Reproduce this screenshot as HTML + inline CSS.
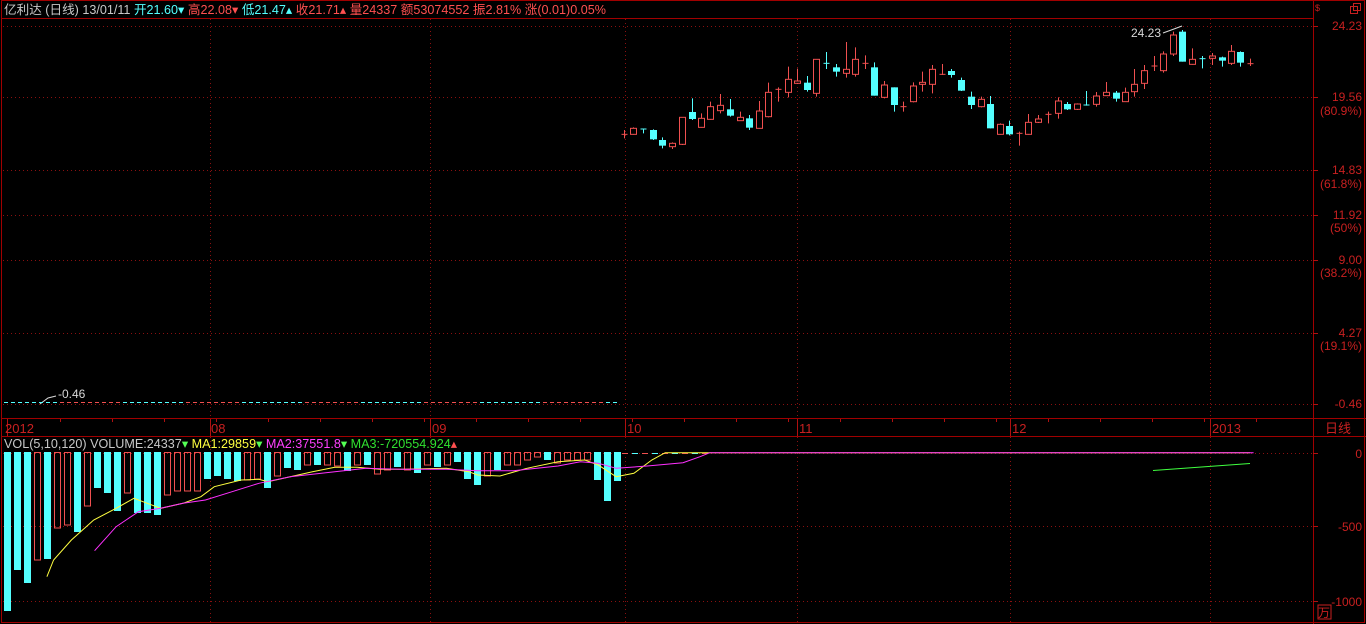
<!DOCTYPE html>
<html><head><meta charset="utf-8">
<style>
html,body{margin:0;padding:0;background:#000;width:1366px;height:624px;overflow:hidden;}
svg{display:block;font-family:"Liberation Sans","Noto Sans CJK SC",sans-serif;}
</style></head>
<body>
<svg id="s" width="1366" height="624" xmlns="http://www.w3.org/2000/svg">
<rect x="0" y="0" width="1366" height="624" fill="#000"/>
<g stroke="#a00000" fill="none" stroke-width="1">
<rect x="1.5" y="0.5" width="1363" height="622"/>
<line x1="1313.5" y1="0" x2="1313.5" y2="624"/>
<line x1="2" y1="18.5" x2="1313" y2="18.5"/>
<line x1="2" y1="418.5" x2="1366" y2="418.5"/>
<line x1="2" y1="436.5" x2="1366" y2="436.5"/>
</g>
<g stroke="#8a1010" stroke-dasharray="1,3" stroke-width="1">
<line x1="3" y1="26.5" x2="1313" y2="26.5"/>
<line x1="3" y1="97.5" x2="1313" y2="97.5"/>
<line x1="3" y1="170.5" x2="1313" y2="170.5"/>
<line x1="3" y1="215.5" x2="1313" y2="215.5"/>
<line x1="3" y1="260.5" x2="1313" y2="260.5"/>
<line x1="3" y1="333.5" x2="1313" y2="333.5"/>
<line x1="3" y1="404.5" x2="1313" y2="404.5"/>
<line x1="3" y1="453.5" x2="1313" y2="453.5"/>
<line x1="3" y1="526.5" x2="1313" y2="526.5"/>
<line x1="3" y1="601.5" x2="1313" y2="601.5"/>
<line x1="210.5" y1="19" x2="210.5" y2="418"/><line x1="210.5" y1="437" x2="210.5" y2="622"/>
<line x1="430.5" y1="19" x2="430.5" y2="418"/><line x1="430.5" y1="437" x2="430.5" y2="622"/>
<line x1="625.5" y1="19" x2="625.5" y2="418"/><line x1="625.5" y1="437" x2="625.5" y2="622"/>
<line x1="797.5" y1="19" x2="797.5" y2="418"/><line x1="797.5" y1="437" x2="797.5" y2="622"/>
<line x1="1010.5" y1="19" x2="1010.5" y2="418"/><line x1="1010.5" y1="437" x2="1010.5" y2="622"/>
<line x1="1210.5" y1="19" x2="1210.5" y2="418"/><line x1="1210.5" y1="437" x2="1210.5" y2="622"/>
</g>
<g stroke="#b01010" stroke-width="1">
<line x1="7.5" y1="419" x2="7.5" y2="436"/><line x1="210.5" y1="419" x2="210.5" y2="436"/>
<line x1="430.5" y1="419" x2="430.5" y2="436"/><line x1="625.5" y1="419" x2="625.5" y2="436"/>
<line x1="797.5" y1="419" x2="797.5" y2="436"/><line x1="1010.5" y1="419" x2="1010.5" y2="436"/>
<line x1="1210.5" y1="419" x2="1210.5" y2="436"/>
<line x1="1313" y1="26.5" x2="1318" y2="26.5"/><line x1="1313" y1="97.5" x2="1318" y2="97.5"/>
<line x1="1313" y1="170.5" x2="1318" y2="170.5"/><line x1="1313" y1="215.5" x2="1318" y2="215.5"/>
<line x1="1313" y1="260.5" x2="1318" y2="260.5"/><line x1="1313" y1="333.5" x2="1318" y2="333.5"/>
<line x1="1313" y1="404.5" x2="1318" y2="404.5"/><line x1="1313" y1="453.5" x2="1318" y2="453.5"/>
<line x1="1313" y1="526.5" x2="1318" y2="526.5"/><line x1="1313" y1="601.5" x2="1318" y2="601.5"/>
</g>
<g font-size="12.6">
<text x="4" y="14"><tspan fill="#c8c8c8">亿利达 (日线) 13/01/11 </tspan><tspan fill="#54ffff">开21.60▾ </tspan><tspan fill="#ff5050">高22.08▾ </tspan><tspan fill="#54ffff">低21.47▴ </tspan><tspan fill="#ff5050">收21.71▴ 量24337 额53074552 振2.81% 涨(0.01)0.05%</tspan></text>
<text x="4" y="448"><tspan fill="#c8c8c8">VOL(5,10,120) VOLUME:24337</tspan><tspan fill="#54ff54">▾ </tspan><tspan fill="#ffff40">MA1:29859</tspan><tspan fill="#54ff54">▾ </tspan><tspan fill="#ff40ff">MA2:37551.8</tspan><tspan fill="#54ff54">▾ </tspan><tspan fill="#30e030">MA3:-720554.924</tspan><tspan fill="#ff5050">▴</tspan></text>
</g>
<g font-size="13" fill="#c82020">
<text x="5" y="433">2012</text><text x="211" y="433">08</text><text x="432" y="433">09</text>
<text x="627" y="433">10</text><text x="799" y="433">11</text><text x="1012" y="433">12</text>
<text x="1212" y="433">2013</text><text x="1325" y="433">日线</text>
</g>
<g font-size="12" fill="#c82020" text-anchor="end">
<text x="1362" y="30">24.23</text>
<text x="1362" y="101">19.56</text><text x="1362" y="115">(80.9%)</text>
<text x="1362" y="174">14.83</text><text x="1362" y="188">(61.8%)</text>
<text x="1362" y="219">11.92</text><text x="1362" y="232">(50%)</text>
<text x="1362" y="264">9.00</text><text x="1362" y="277">(38.2%)</text>
<text x="1362" y="337">4.27</text><text x="1362" y="350">(19.1%)</text>
<text x="1362" y="408">-0.46</text>
<text x="1362" y="458">0</text><text x="1362" y="531">-500</text><text x="1362" y="606">-1000</text>
</g>
<rect x="1318" y="605" width="13" height="14" fill="none" stroke="#c82020"/>
<text x="1318" y="617" font-size="12" fill="#c82020">万</text>
<text x="1315" y="11" font-size="9" fill="#c82020">$</text>
<rect x="1350.5" y="6.5" width="7" height="7" fill="none" stroke="#c82020"/>
<rect x="1353.5" y="3.5" width="7" height="7" fill="none" stroke="#c82020"/>
<text x="58" y="398" font-size="12" fill="#d8d8d8">-0.46</text>
<polyline points="40,404 48,398 56,396" fill="none" stroke="#d8d8d8"/>
<text x="1131" y="37" font-size="12" fill="#d8d8d8">24.23</text>
<polyline points="1163,33 1174,29 1182,26" fill="none" stroke="#d8d8d8"/>
<g id="c"></g>
</svg>
<script>
var R="#f05050",C="#54ffff";
var out="";
function ln(x1,y1,x2,y2,c){out+='<line x1="'+x1+'" y1="'+y1+'" x2="'+x2+'" y2="'+y2+'" stroke="'+c+'"/>';}
for(var x=4;x<620;x+=7){ln(x,402.5,x+4,402.5,(Math.floor(x/60)%2)?R:C);}
for(var x=60;x<1300;x+=52){ln(x+.5,419,x+.5,422,"#b01010");}
var cd=[[10,313,313,300,325,'rx'],[32,295,313,292,314,'r'],[55,297,297,297,310,'cx'],[78,300,328,298,330,'c'],[100,330,347,322,355,'c'],[124,340,350,337,357,'r'],[148,262,343,262,345,'r'],[170,246,267,205,270,'c'],[193,265,292,250,293,'r'],[214,230,268,215,269,'r'],[238,226,242,192,250,'r'],[262,238,257,207,260,'c'],[284,262,272,245,273,'r'],[307,265,293,255,300,'c'],[331,243,295,213,296,'r'],[352,187,260,158,262,'r'],[375,178,178,172,215,'rx'],[400,148,187,110,202,'r'],[421,153,160,116,162,'r'],[444,158,180,138,185,'c'],[466,88,190,88,200,'r'],[490,100,100,66,117,'cx'],[513,112,125,102,140,'c'],[536,118,130,36,143,'r'],[559,88,133,52,140,'r'],[583,100,100,76,117,'rx'],[604,112,197,97,197,'c'],[628,165,202,153,205,'r'],[650,172,225,172,245,'c'],[673,230,230,215,245,'rx'],[697,168,215,157,217,'r'],[718,157,163,125,185,'r'],[742,118,163,105,190,'r'],[765,133,133,102,135,'rx'],[787,123,135,117,143,'c'],[810,150,182,143,183,'c'],[833,200,225,185,237,'c'],[857,208,230,200,232,'r'],[880,222,295,198,295,'c'],[903,283,313,280,314,'r'],[925,288,313,272,316,'c'],[948,310,310,305,347,'rx'],[970,277,313,252,314,'r'],[993,267,277,255,279,'r'],[1017,253,253,245,280,'rx'],[1040,213,250,202,266,'r'],[1062,222,238,216,240,'c'],[1086,222,238,220,240,'r'],[1108,225,225,183,227,'cx'],[1132,198,223,186,230,'r'],[1155,187,197,156,198,'r'],[1178,188,206,183,215,'c'],[1200,187,215,173,216,'r'],[1222,163,185,117,200,'r'],[1245,122,160,105,177,'r'],[1268,108,108,78,123,'rx'],[1290,72,122,64,128,'r'],[1314,15,72,5,78,'r'],[1336,5,95,0,95,'c'],[1360,88,103,55,104,'r'],[1383,86,86,78,115,'cx'],[1406,78,85,69,105,'r'],[1430,82,92,80,110,'c'],[1452,64,100,45,105,'r'],[1474,66,98,64,110,'c'],[1497,101,101,86,108,'rx']];
cd.forEach(function(d){
 var x=Math.round(620+d[0]/2.376)+.5, t=30+d[1]/3, b=30+d[2]/3, h=30+d[3]/3, l=30+d[4]/3;
 var col=d[5][0]=='r'?R:C;
 ln(x,h,x,l,col);
 if(d[5].length==2){ln(x-3,t,x+3,t,col);}
 else if(d[5]=='c'){out+='<rect x="'+(x-3.5)+'" y="'+t+'" width="7" height="'+Math.max(1,b-t)+'" fill="'+C+'"/>';}
 else{out+='<rect x="'+(x-3)+'" y="'+t+'" width="6" height="'+Math.max(1,b-t)+'" fill="#000" stroke="'+R+'"/>';}
});
var vb=[[611,'c'],[570,'c'],[583,'c'],[560,'r'],[559,'c'],[528,'r'],[525,'r'],[532,'c'],[506,'r'],[488,'c'],[493,'c'],[511,'c'],[493,'r'],[513,'c'],[513,'c'],[515,'c'],[495,'r'],[491,'r'],[491,'r'],[491,'r'],[479,'c'],[476,'c'],[479,'c'],[481,'c'],[480,'r'],[479,'r'],[488,'c'],[476,'r'],[468,'c'],[470,'c'],[465,'r'],[465,'c'],[465,'r'],[466,'r'],[471,'c'],[465,'r'],[465,'c'],[474,'r'],[470,'r'],[467,'c'],[470,'r'],[473,'c'],[465,'r'],[467,'c'],[465,'r'],[462,'c'],[479,'c'],[485,'c'],[476,'r'],[470,'c'],[465,'r'],[465,'r'],[460,'r'],[457,'r'],[460,'c'],[463,'r'],[460,'r'],[460,'r'],[460,'r'],[480,'c'],[501,'c'],[481,'c']];
vb.forEach(function(d,i){
 var x=Math.round(3.5+i*10);
 if(d[1]=='c') out+='<rect x="'+x+'" y="452" width="7" height="'+(d[0]-452)+'" fill="'+C+'"/>';
 else out+='<rect x="'+(x+.5)+'" y="452.5" width="6" height="'+(d[0]-452.5)+'" fill="none" stroke="'+R+'"/>';
});
for(var x=622;x<705;x+=10){ln(x,453.5,x+6,453.5,(x%20<10)?R:C);}
function pl(pts,col,sx,sy,oy){var s=pts.map(function(p){return (p[0]/sx).toFixed(1)+','+(oy+p[1]/sy).toFixed(1)}).join(' ');out+='<polyline points="'+s+'" fill="none" stroke="'+col+'"/>';}
pl([[105,590],[120,540],[160,480],[210,420],[260,385],[300,355],[330,370],[360,385],[410,370],[450,350],[480,320],[540,300],[580,298],[600,305],[650,290],[700,275],[750,262],[800,262],[850,268],[900,268],[1000,265],[1050,275],[1070,285],[1120,288],[1180,265],[1250,245],[1310,240],[1340,255],[1380,290],[1420,280],[1460,240],[1490,218],[1568,218],[2800,218]],"#ffff40",2.24,3,380);
pl([[212,512],[260,440],[310,395],[360,385],[410,370],[460,360],[520,335],[580,310],[650,290],[750,275],[820,265],[900,268],[1000,268],[1070,272],[1150,272],[1250,258],[1300,245],[1340,250],[1380,265],[1450,258],[1530,248],[1568,230],[1590,218],[2808,218]],"#ff30ff",2.24,3,380);
ln(1153,470.5,1250,463.5,"#40ff40");
document.getElementById('c').innerHTML=out;
</script>
</body></html>
